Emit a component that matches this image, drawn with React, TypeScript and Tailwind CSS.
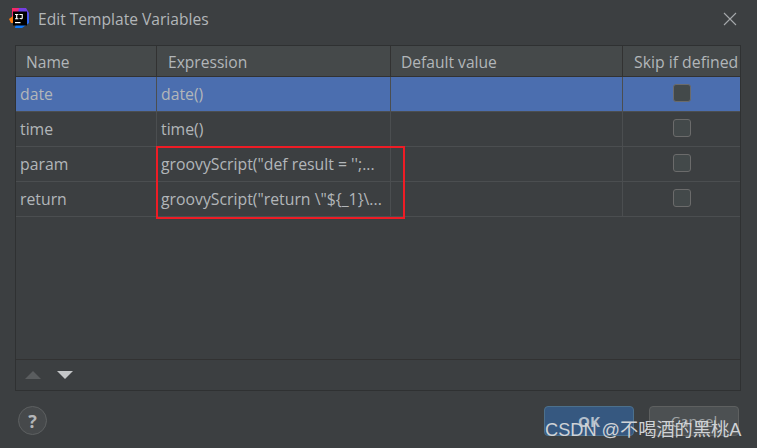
import React from "react";

const rows = [
  { name: "date", expr: "date()", selected: true },
  { name: "time", expr: "time()" },
  { name: "param", expr: 'groovyScript("def result = \'\';...' },
  { name: "return", expr: 'groovyScript("return \\"${_1}\\...' },
];

function Logo() {
  return (
    <svg width="21" height="21" viewBox="0 0 21 21" className="shrink-0">
      <defs>
        <linearGradient id="a" x1="0" y1="0" x2="1" y2="1">
          <stop offset="0" stopColor="#fe2857" />
          <stop offset="1" stopColor="#b32bd8" />
        </linearGradient>
        <linearGradient id="b" x1="0" y1="0" x2="0" y2="1">
          <stop offset="0" stopColor="#7a3be0" />
          <stop offset="1" stopColor="#087cfa" />
        </linearGradient>
      </defs>
      <path d="M3 0h10l2 3-8 14-4-3z" fill="url(#a)" />
      <path d="M0 11l4-3 3 4-2 3H2z" fill="#f97a12" />
      <path d="M10 0l7 0 3 5v10l-7 5-7 0z" fill="url(#b)" />
      <rect x="4" y="3.500" width="14" height="14" fill="#000" />
      <rect x="6" y="14" width="5.500" height="1.200" fill="#fff" />
      <path d="M6 6h3.400v1H8.300v3.200h1.100v1H6v-1h1.100V7H6zM10.400 6h3.400v3.700c0 1-.6 1.600-1.700 1.600-.8 0-1.400-.3-1.800-.8l.7-.7c.3.300.6.500 1 .5s.7-.2.700-.7V7h-2.300z" fill="#fff" />
    </svg>
  );
}

export default function App() {
  return (
    <div className="relative w-[757px] h-[448px] bg-[#3c3f41] flex flex-col overflow-hidden text-[15.8px] text-[#b2b6b9] font-['Open_Sans','Noto_Sans',sans-serif]">
      <div className="h-[45px] flex items-center pl-[9px] pr-[20px] pb-[8px] shrink-0">
        <Logo />
        <span className="ml-[8px] text-[#b2b6b9] text-[15.6px] leading-[20px]">Edit Template Variables</span>
        <svg width="14" height="14" viewBox="0 0 14 14" className="ml-auto">
          <path d="M1 1l12 12M13 1L1 13" stroke="#a6a9ab" strokeWidth="1.1" fill="none" />
        </svg>
      </div>

      <div className="mx-[15px] w-[726px] h-[346px] shrink-0 border border-[#2f3132] flex flex-col">
        <div className="h-[31px] flex bg-[#45494a] border-b border-[#323232] shrink-0 text-[15.6px]">
          <div className="w-[141px] border-r border-[#323232] pl-[10px] pt-[1px] leading-[30px]">Name</div>
          <div className="w-[234px] border-r border-[#323232] pl-[11px] pt-[1px] leading-[30px]">Expression</div>
          <div className="w-[232px] border-r border-[#323232] pl-[10px] pt-[1px] leading-[30px]">Default value</div>
          <div className="flex-1 pl-[11px] pt-[1px] leading-[30px] whitespace-nowrap text-[15.8px]">Skip if defined</div>
        </div>
        {rows.map((r) => (
          <div key={r.name} className={`h-[35px] flex shrink-0 border-b border-[#4b4e50] ${r.selected ? "bg-[#4b6eaf]" : ""}`}>
            <div className="w-[141px] border-r border-[#4b4e50] pl-[4px] pt-[1px] leading-[33px]">{r.name}</div>
            <div className="w-[234px] border-r border-[#4b4e50] pl-[4px] pt-[1px] leading-[33px] whitespace-nowrap">{r.expr}</div>
            <div className="w-[232px] border-r border-[#4b4e50]" />
            <div className="flex-1 flex justify-center pt-[7px] pl-[1px]">
              <div className="w-[18px] h-[18px] rounded-[3px] border border-[#6b6b6b] bg-[#43494a]" />
            </div>
          </div>
        ))}
        <div className="flex-1" />
        <div className="h-[31px] border-t border-[#323232] flex items-center pl-[9px] gap-[16px] shrink-0">
          <svg width="16" height="8" viewBox="0 0 16 8"><path d="M8 0l8 8H0z" fill="#5a5d5f" /></svg>
          <svg width="16" height="8" viewBox="0 0 16 8"><path d="M0 0h16L8 8z" fill="#c4c6c8" /></svg>
        </div>
      </div>

      <div className="flex items-start pl-[18px] pr-[18px] pt-[15px] flex-1">
        <div className="w-[29px] h-[29px] rounded-full border border-[#5d6061] bg-[#46494b] flex items-center justify-center text-[18px] font-bold text-[#b4b6b8] leading-none">?</div>
        <div className="ml-auto flex gap-[15px]">
          <div className="w-[90px] h-[30px] rounded-[4px] bg-[#365880] border border-[#4c708c] text-center leading-[28px] text-[15px] font-bold text-[#b4c0cc]">OK</div>
          <div className="w-[90px] h-[30px] rounded-[4px] bg-[#4c5052] border border-[#5e6060] text-center leading-[28px] text-[15px] text-[#a0a4a6]">Cancel</div>
        </div>
      </div>

      <div className="absolute left-[156px] top-[146px] w-[249px] h-[73px] border-2 border-[#ee1c25] pointer-events-none" />
      <div className="absolute left-[545px] top-[418px] text-[18.2px] leading-[24px] text-[#d0d3d6] whitespace-nowrap font-['Liberation_Sans','Noto_Sans_CJK_SC',sans-serif]">CSDN @不喝酒的黑桃A</div>
    </div>
  );
}
